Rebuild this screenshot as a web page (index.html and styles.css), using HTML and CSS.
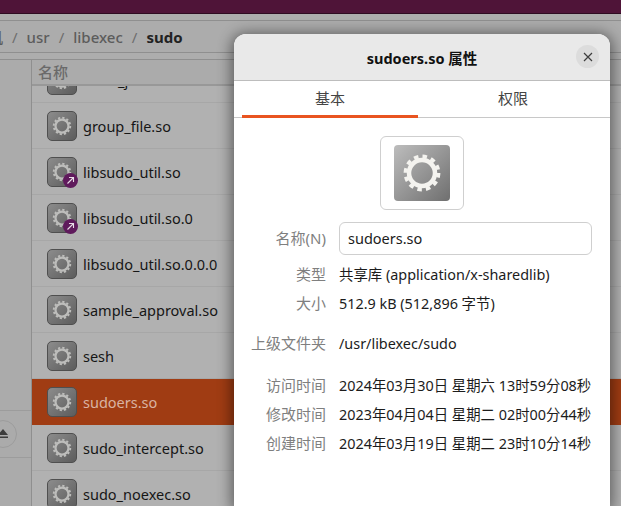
FILE: index.html
```html
<!DOCTYPE html>
<html lang="zh-CN">
<head>
    <meta charset="UTF-8">
    <meta name="viewport" content="width=device-width, initial-scale=1.0">
    <title>sudoers.so 属性</title>
    <link rel="stylesheet" href="styles.css">
</head>
<body>
    <svg class="defs" width="0" height="0">
        <defs>
            <g id="gear" fill="none" stroke="currentColor">
                <circle cx="28" cy="28" r="13" stroke-width="4.500"/>
                <circle cx="28" cy="28" r="16.500" stroke-width="3.800" stroke-dasharray="4.500 4.140"/>
            </g>
        </defs>
    </svg>

    <div class="topbar"></div>
    <div class="gap-strip"></div>
    <div class="pathbar">
        <span class="crumb clipped">计算机</span>
        <span class="sep">/</span>
        <span class="crumb">usr</span>
        <span class="sep">/</span>
        <span class="crumb">libexec</span>
        <span class="sep">/</span>
        <span class="crumb current">sudo</span>
    </div>
    <div class="gap-strip"></div>

    <div class="main">
        <aside class="sidebar">
            <div class="eject-row">
                <span class="eject"><svg width="12" height="12" viewBox="0 0 12 12"><path d="M6 1 11 7H1zM1 8.500h10V10H1z" fill="#3d3d3d"/></svg></span>
            </div>
        </aside>
        <section class="files">
            <div class="col-head">名称</div>
            <div class="rows">
                <div class="row cut">
                    <svg class="icon" viewBox="0 0 56 56"><use href="#gear"/></svg>
                    <span>audit_json.so</span>
                </div>
                <div class="row">
                    <svg class="icon" viewBox="0 0 56 56"><use href="#gear"/></svg>
                    <span>group_file.so</span>
                </div>
                <div class="row">
                    <div class="icon-wrap">
                        <svg class="icon" viewBox="0 0 56 56"><use href="#gear"/></svg>
                        <span class="badge"><svg width="9" height="9" viewBox="0 0 9 9"><path d="M1.500 7.500 7.500 1.500M3 1.500h4.500V6" fill="none" stroke="#e8dde6" stroke-width="1.100"/></svg></span>
                    </div>
                    <span>libsudo_util.so</span>
                </div>
                <div class="row">
                    <div class="icon-wrap">
                        <svg class="icon" viewBox="0 0 56 56"><use href="#gear"/></svg>
                        <span class="badge"><svg width="9" height="9" viewBox="0 0 9 9"><path d="M1.500 7.500 7.500 1.500M3 1.500h4.500V6" fill="none" stroke="#e8dde6" stroke-width="1.100"/></svg></span>
                    </div>
                    <span>libsudo_util.so.0</span>
                </div>
                <div class="row">
                    <svg class="icon" viewBox="0 0 56 56"><use href="#gear"/></svg>
                    <span>libsudo_util.so.0.0.0</span>
                </div>
                <div class="row">
                    <svg class="icon" viewBox="0 0 56 56"><use href="#gear"/></svg>
                    <span>sample_approval.so</span>
                </div>
                <div class="row">
                    <svg class="icon" viewBox="0 0 56 56"><use href="#gear"/></svg>
                    <span>sesh</span>
                </div>
                <div class="row selected">
                    <svg class="icon" viewBox="0 0 56 56"><use href="#gear"/></svg>
                    <span>sudoers.so</span>
                </div>
                <div class="row">
                    <svg class="icon" viewBox="0 0 56 56"><use href="#gear"/></svg>
                    <span>sudo_intercept.so</span>
                </div>
                <div class="row">
                    <svg class="icon" viewBox="0 0 56 56"><use href="#gear"/></svg>
                    <span>sudo_noexec.so</span>
                </div>
            </div>
        </section>
    </div>

    <div class="dialog">
        <header class="dialog-title">
            <h1>sudoers.so 属性</h1>
            <span class="close"><svg width="10" height="10" viewBox="0 0 10 10"><path d="M1 1 9 9M9 1 1 9" stroke="#3d3d3d" stroke-width="1.200"/></svg></span>
        </header>
        <nav class="tabs">
            <div class="tab active">基本</div>
            <div class="tab wide">权限</div>
        </nav>
        <div class="preview">
            <div class="preview-box">
                <svg class="preview-icon" viewBox="0 0 56 56"><use href="#gear"/></svg>
            </div>
        </div>
        <div class="props">
            <label class="key name-key">名称(N)</label>
            <div class="entry">sudoers.so</div>

            <span class="key first">类型</span>
            <span class="val first">共享库 (application/x-sharedlib)</span>
            <span class="key">大小</span>
            <span class="val">512.9 kB (512,896 字节)</span>

            <span class="key parent">上级文件夹</span>
            <span class="val parent">/usr/libexec/sudo</span>

            <span class="key times">访问时间</span>
            <span class="val times">2024年03月30日 星期六 13时59分08秒</span>
            <span class="key">修改时间</span>
            <span class="val">2023年04月04日 星期二 02时00分44秒</span>
            <span class="key">创建时间</span>
            <span class="val">2024年03月19日 星期二 23时10分14秒</span>
        </div>
    </div>
</body>
</html>
```

FILE: styles.css
```css
* {
    box-sizing: border-box;
    margin: 0;
    padding: 0;
}

html, body {
    height: 100%;
}

body {
    position: relative;
    overflow: hidden;
    background: #adadad;
    color: #1c1c1c;
    font-family: "Noto Sans", "Noto Sans CJK SC", sans-serif;
    font-size: 15px;
}

.defs {
    position: absolute;
}

.topbar {
    height: 14px;
    background: #4f1438;
    border-bottom: 1px solid #2e0b21;
}

.gap-strip {
    height: 7px;
    background: #adadad;
    border-bottom: 1px solid #8f8f8f;
}

.pathbar {
    display: flex;
    align-items: center;
    gap: 9px;
    height: 32px;
    border-bottom: 1px solid #8f8f8f;
    background: #acacac;
    font-weight: 500;
    overflow: hidden;
}

.crumb {
    color: #5c5c5c;
}

.crumb.clipped {
    margin-left: -42px;
}

.crumb.current {
    color: #222;
    font-weight: 700;
}

.sep {
    color: #6e6e6e;
    font-weight: 400;
}

.main {
    display: flex;
    height: 446px;
    overflow: hidden;
}

.sidebar {
    flex: none;
    width: 32px;
    background: #ababab;
    border-right: 1px solid #8f8f8f;
    padding-top: 350px;
}

.eject-row {
    height: 48px;
    display: flex;
    align-items: center;
    justify-content: flex-end;
    padding-right: 14px;
    border-top: 1px solid #9c9c9c;
    border-bottom: 1px solid #9c9c9c;
}

.eject {
    flex: none;
    width: 28px;
    height: 28px;
    display: flex;
    align-items: center;
    justify-content: center;
    border: 1px solid #9c9c9c;
    border-radius: 50%;
}

.files {
    flex: 1;
    min-width: 0;
    position: relative;
    background: #b1b1b1;
}

.col-head {
    position: relative;
    z-index: 1;
    height: 26px;
    padding-left: 6px;
    line-height: 24px;
    color: #6a6a6a;
    font-weight: 500;
    background: #ababab;
    border-bottom: 2px solid #989898;
}

.rows {
    margin-top: -29px;
}

.row {
    display: flex;
    align-items: center;
    gap: 6px;
    height: 46px;
    padding-left: 15px;
    border-bottom: 1px solid #a7a7a7;
    font-size: 14.500px;
    color: #161616;
}

.row.selected {
    background: #a03c13;
    border-bottom-color: #a03c13;
    color: #d9b3a2;
}

.icon {
    flex: none;
    display: block;
    width: 30px;
    height: 30px;
    border-radius: 5px;
    border: 1px solid #4f4f4f;
    background: linear-gradient(135deg, #8c8c8c, #5c5c5c);
    color: #bdbdbb;
}

.icon-wrap {
    position: relative;
    flex: none;
    width: 30px;
    height: 30px;
}

.badge {
    position: absolute;
    right: -1px;
    bottom: -1px;
    width: 15px;
    height: 15px;
    border-radius: 50%;
    background: #5f1a5c;
    display: flex;
    align-items: center;
    justify-content: center;
}

.dialog {
    position: absolute;
    z-index: 2;
    left: 234px;
    top: 34px;
    width: 376px;
    height: 472px;
    background: #fff;
    border-radius: 12px 12px 0 0;
    box-shadow: 0 2px 14px 3px rgba(0, 0, 0, .45);
}

.dialog-title {
    position: relative;
    height: 47px;
    background: #e9e9e9;
    border-bottom: 1px solid #bdbdbd;
    border-radius: 12px 12px 0 0;
    display: flex;
    align-items: center;
    justify-content: center;
}

.dialog-title h1 {
    font-size: 14.500px;
    font-weight: 700;
    color: #111;
}

.close {
    position: absolute;
    right: 11px;
    top: 11px;
    width: 23px;
    height: 23px;
    border-radius: 50%;
    background: #dcdcdc;
    display: flex;
    align-items: center;
    justify-content: center;
}

.tabs {
    display: flex;
    height: 37px;
    padding-left: 8px;
    border-bottom: 1px solid #c8c8c8;
}

.tab {
    width: 176px;
    height: 37px;
    line-height: 34px;
    text-align: center;
    color: #444;
}

.tab.wide {
    width: 190px;
}

.tab.active {
    border-bottom: 3px solid #e95420;
}

.preview {
    display: flex;
    justify-content: center;
    margin-top: 18px;
}

.preview-box {
    width: 84px;
    height: 74px;
    border: 1px solid #cfcfcf;
    border-radius: 6px;
    display: flex;
    align-items: center;
    justify-content: center;
}

.preview-icon {
    display: block;
    width: 56px;
    height: 56px;
    border-radius: 4px;
    background: linear-gradient(135deg, #bdbdbd, #6f6f6f);
    color: #f4f3ef;
}

.props {
    display: grid;
    grid-template-columns: 92px 253px;
    column-gap: 13px;
    align-items: end;
    margin-top: 12px;
    line-height: 29px;
}

.key {
    text-align: right;
    color: #7f7f7f;
    white-space: nowrap;
}

.name-key {
    align-self: center;
}

.val {
    color: #1c1c1c;
    font-size: 14.400px;
    white-space: nowrap;
}

.first {
    padding-top: 5px;
}

.parent {
    padding-top: 11px;
}

.times {
    padding-top: 13px;
}

.entry {
    height: 33px;
    padding-left: 8px;
    border: 1px solid #cfcfcf;
    border-radius: 6px;
    line-height: 31px;
    font-size: 14.500px;
}
```
